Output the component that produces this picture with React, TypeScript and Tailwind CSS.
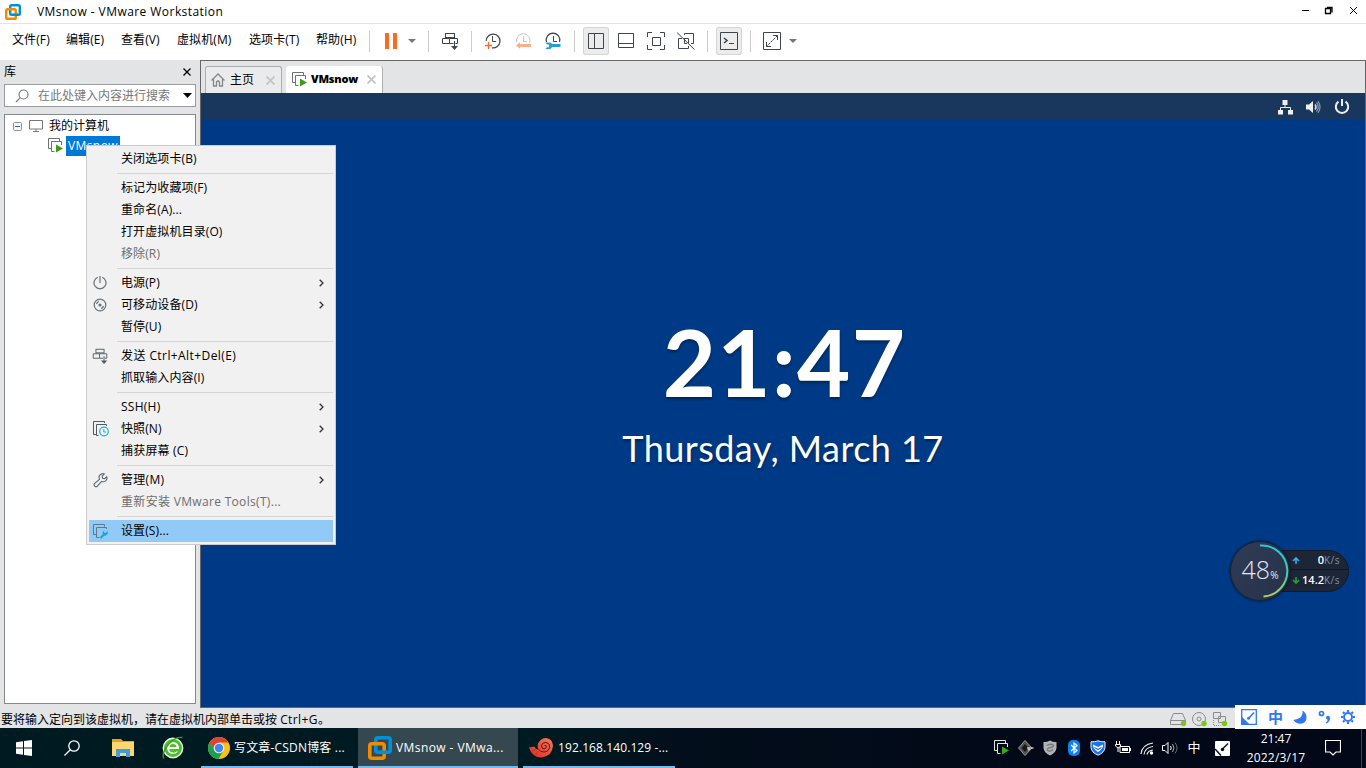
import type { ReactNode } from "react";
import clsx from "clsx";

const UI_FONT = "font-['Open_Sans','Noto_Sans_CJK_SC',sans-serif]";

/* ---------- shared icons ---------- */

function VmwareLogo({ size }: { size: number }) {
  return (
    <svg width={size} height={size} viewBox="0 0 24 24" fill="none" strokeWidth="3.6">
      <rect x="7.8" y="1.8" width="14.4" height="14.4" rx="2" stroke="#0091da" />
      <rect x="1.8" y="7.8" width="14.4" height="14.4" rx="2" stroke="#f38b00" />
      <path d="M12 16.2h7" stroke="#0091da" />
    </svg>
  );
}

function VmIcon({ stroke = "#6d7275", play = "#3f9c12" }: { stroke?: string; play?: string }) {
  return (
    <svg width="16" height="16" viewBox="0 0 16 16" fill="none">
      <path d="M3 10.5H.5V.5h11V3" stroke={stroke} />
      <path d="M6.500 13.500H3.500V3.500h10V7" stroke={stroke} />
      <path d="M8 6.500v8l7-4z" fill={play} />
    </svg>
  );
}

function SendKeysIcon({ stroke = "#3f4548" }: { stroke?: string }) {
  return (
    <svg width="26" height="26" viewBox="0 0 26 26" fill="none" stroke={stroke}>
      <rect x="8.500" y="5.500" width="9" height="4" />
      <path d="M12.500 10.500h-7v5h7zM12.500 10.500h8v5h-2M12.500 15.500h4" />
      <path d="M17.500 13v7" />
      <path d="M14 18l3.500 4 3.500-4z" fill={stroke} stroke="none" />
    </svg>
  );
}

/* ---------- title, menu and tool bars ---------- */

function TitleBar() {
  return (
    <div className="flex h-[23px] items-center bg-white pl-[5px]">
      <VmwareLogo size={16} />
      <span className="ml-4 text-[12px] tracking-[0.44px]">VMsnow - VMware Workstation</span>
      <svg className="ml-auto" width="70" height="23" viewBox="0 0 70 23" fill="none" stroke="#000">
        <path d="M6 10.500h7" />
        <path d="M29.500 8.500h5v5h-5zM31 7.500h5v5" strokeWidth="1.3" />
        <path d="M54 7l7 7M61 7l-7 7" />
      </svg>
    </div>
  );
}

const menus = [
  { label: "文件(F)", width: "w-[54px]" },
  { label: "编辑(E)", width: "w-[55px]" },
  { label: "查看(V)", width: "w-[56px]" },
  { label: "虚拟机(M)", width: "w-[72px]" },
  { label: "选项卡(T)", width: "w-[67px]" },
  { label: "帮助(H)", width: "w-[53px]" },
];

function Separator({ className }: { className?: string }) {
  return <span className={clsx("h-[21px] w-px bg-[#cbcbcb]", className)} />;
}

function Tool({ children, active, className }: { children: ReactNode; active?: boolean; className?: string }) {
  return (
    <span
      className={clsx(
        "flex h-7 w-[26px] items-center justify-center",
        active && "rounded-[3px] bg-[#ececed] shadow-[inset_0_0_0_1px_#d6d6d6]",
        className,
      )}
    >
      {children}
    </span>
  );
}

function ToolSvg({ children }: { children: ReactNode }) {
  return (
    <svg width="26" height="26" viewBox="0 0 26 26" fill="none" stroke="#3f4548" className="shrink-0">
      {children}
    </svg>
  );
}

function DropArrow() {
  return (
    <span className="flex w-4 justify-center">
      <svg width="8" height="4" viewBox="0 0 8 4">
        <path d="M0 0h8L4 4z" fill="#777" />
      </svg>
    </span>
  );
}

function MenuBar() {
  return (
    <div className="flex h-[37px] items-center border-t border-[#e3e3e3] bg-white pb-[2px] pl-3 text-[12px]">
      {menus.map((m) => (
        <span key={m.label} className={clsx("-mt-[2px] shrink-0 whitespace-nowrap tracking-[0.1px]", m.width)}>
          {m.label}
        </span>
      ))}
      <Separator />
      <Tool className="ml-2">
        <ToolSvg>
          <path d="M7 5h4v16H7zM15 5h4v16h-4z" fill="#ff6a1f" stroke="none" />
        </ToolSvg>
      </Tool>
      <DropArrow />
      <Separator className="ml-2" />
      <Tool className="ml-2">
        <SendKeysIcon />
      </Tool>
      <Separator className="ml-2" />
      <Tool className="ml-[7px]">
        <ToolSvg>
          <path d="M7.200 13A6.900 6.900 0 1 1 13 19.800" strokeWidth="1.2" />
          <path d="M13.500 8v5.500H17" />
          <path d="M6 17.500h7M9.500 14v7" stroke="#ff6a1f" strokeWidth="1.4" />
        </ToolSvg>
      </Tool>
      <Tool className="ml-[5px]">
        <ToolSvg>
          <path d="M6.800 14.500a6.800 6.800 0 1 1 13 0" stroke="#c4c6c7" />
          <path d="M13.500 8v5.500H17" stroke="#c4c6c7" />
          <path d="M6 17.500l4-3.200v1.700h11v3H10v1.700z" fill="#ffad84" stroke="none" />
        </ToolSvg>
      </Tool>
      <Tool className="ml-1">
        <ToolSvg>
          <path d="M6.500 14a6.800 6.800 0 1 1 13 0" strokeWidth="1.2" />
          <path d="M13.500 8v5.500H17" />
          <path
            d="M5.500 14.500h4q2 0 2.500 1.500h8.500v3H12q-.5 2-2.500 2h-4l1.500-1.800H9v-2.800H7z"
            fill="#259bdc"
            stroke="none"
          />
        </ToolSvg>
      </Tool>
      <Separator className="ml-2" />
      <Tool active className="ml-2">
        <ToolSvg>
          <path d="M5.500 5.500h15v15h-15zM11.500 5.500v15" />
        </ToolSvg>
      </Tool>
      <Tool className="ml-1">
        <ToolSvg>
          <path d="M5.500 5.500h15v14h-15zM5.500 15.500h15" />
        </ToolSvg>
      </Tool>
      <Tool className="ml-1">
        <ToolSvg>
          <path d="M4.500 9V4.500H9M17 4.500h4.500V9M21.500 17v4.500H17M9 21.500H4.500V17M9.500 9.500h8v8h-8z" />
        </ToolSvg>
      </Tool>
      <Tool className="ml-1">
        <ToolSvg>
          <path d="M11.500 7V5.500h9v10H18M9 10.500H5.500v10h10V18M15.500 15.500v-5h-5M11.500 10v5.500H14" />
          <path d="M4 4.500l17.500 17" />
        </ToolSvg>
      </Tool>
      <Separator className="ml-2" />
      <Tool active className="ml-2">
        <ToolSvg>
          <path d="M4.500 4.500h17v17h-17z" />
          <path d="M8 10l3 2.500L8 15" strokeWidth="1.6" />
          <path d="M13 15.500h5" />
        </ToolSvg>
      </Tool>
      <Separator className="ml-2" />
      <Tool className="ml-2">
        <ToolSvg>
          <path d="M4.500 4.500h17v17h-17z" />
          <path d="M14 7.500h4.500V12M12 18.500H7.500V14" />
          <path d="M18.500 7.500l-11 11" strokeDasharray="2.500 1" />
        </ToolSvg>
      </Tool>
      <DropArrow />
    </div>
  );
}

/* ---------- library ---------- */

function Library() {
  return (
    <aside className="flex w-[200px] shrink-0 flex-col px-1 text-[12px]">
      <div className="flex h-6 items-center justify-between pr-[5px]">
        <span>库</span>
        <svg width="8" height="8" viewBox="0 0 8 8" stroke="#000" strokeWidth="1.300">
          <path d="M.5.5l7 7M7.500.5l-7 7" />
        </svg>
      </div>
      <div className="flex h-[23px] shrink-0 items-center border border-[#999da1] bg-white pl-[10px] text-[#777]">
        <svg width="14" height="14" viewBox="0 0 14 14" fill="none" stroke="#7b7b7b" strokeWidth="1.2">
          <circle cx="8.500" cy="5.500" r="4.500" />
          <path d="M5.300 8.700L1 13" />
        </svg>
        <span className="ml-[9px] whitespace-nowrap">在此处键入内容进行搜索</span>
        <svg className="ml-auto mr-[3px]" width="9" height="5" viewBox="0 0 9 5">
          <path d="M0 0h9L4.500 5z" fill="#000" />
        </svg>
      </div>
      <div className="mb-1 mt-[7px] flex-1 border border-[#83898f] bg-white">
        <div className="flex h-[21px] items-center pl-2">
          <svg className="mt-px" width="9" height="9" viewBox="0 0 9 9">
            <rect x=".5" y=".5" width="8" height="8" rx="1" fill="#f6f6f6" stroke="#919191" />
            <path d="M2 4.500h5" stroke="#3a5fb4" />
          </svg>
          <svg className="ml-[7px] mt-px" width="14" height="12" viewBox="0 0 14 12" fill="none" stroke="#74797c">
            <path d="M.5.5h13v8.500H.5zM7 9v2.500M4 11.500h6" />
          </svg>
          <span className="ml-[6px]">我的计算机</span>
        </div>
        <div className="flex h-5 items-center pl-[43px]">
          <VmIcon />
          <span className="ml-[2px] flex h-5 w-[54px] items-center bg-[#0078d7] pl-[2px] tracking-[0.4px] text-white">
            VMsnow
          </span>
        </div>
      </div>
    </aside>
  );
}

/* ---------- console ---------- */

function CloseMark() {
  return (
    <svg width="9" height="9" viewBox="0 0 9 9" stroke="#c3c3c3" strokeWidth="1.700">
      <path d="M.5.5l8 8M8.500.5l-8 8" />
    </svg>
  );
}

function TabStrip() {
  return (
    <div className="flex h-[33px] items-end border-t border-[#666] bg-[#e3e4e6] pl-1 text-[12px]">
      <div className="flex h-[27px] w-[77px] items-center rounded-t-[3px] border border-b-0 border-[#acaeb0] bg-[#eaebec] pl-[5px]">
        <svg width="14" height="14" viewBox="0 0 14 14" fill="none" stroke="#84888b" strokeWidth="1.300">
          <path d="M.5 7.500L7 1l6.500 6.500M2.500 6v7h3V9q1.500-2 3 0v4h3V6" />
        </svg>
        <span className="ml-[5px]">主页</span>
        <span className="ml-[12px]">
          <CloseMark />
        </span>
      </div>
      <div className="ml-1 flex h-[27px] w-[97px] items-center rounded-t-[3px] border-r border-[#acaeb0] bg-white pl-[6px]">
        <VmIcon />
        <span className="ml-[3px] w-[47px] text-[11px] font-extrabold tracking-[-0.200px]">VMsnow</span>
        <span className="ml-[9px]">
          <CloseMark />
        </span>
      </div>
    </div>
  );
}

function GuestScreen() {
  return (
    <div className="flex flex-1 flex-col bg-[#003a86] text-white">
      <div className="flex h-[27px] items-center justify-end bg-[#19375d] pr-[15px]">
        <svg width="16" height="16" viewBox="0 0 16 16" fill="#eee">
          <path d="M5.500 1h5v5h-5zM1 11h5v4.500H1zM11 11h5v4.500h-5z" />
          <path d="M8 5v3.500M3.500 11V8.500H13.500V11" fill="none" stroke="#eee" />
        </svg>
        <svg className="ml-3" width="16" height="16" viewBox="0 0 16 16" fill="none">
          <path d="M1 5.500h3L8 2v12L4 10.500H1z" fill="#eee" />
          <path d="M10 5.500q2 2.500 0 5" stroke="#ddd" strokeWidth="1.500" />
          <path d="M11.500 3.500q3.500 4.500 0 9M13 2q4 6 0 12" stroke="#8294ab" strokeWidth="1.300" />
        </svg>
        <svg className="ml-[13px]" width="16" height="16" viewBox="0 0 16 16" fill="none" stroke="#eee" strokeWidth="2">
          <path d="M4.500 2.700a6.200 6.200 0 1 0 7 0M8 0v7" />
        </svg>
      </div>
      <div className="flex flex-1 flex-col items-center pt-[187px] font-['Lato',sans-serif] [text-shadow:0_2px_3px_rgba(0,0,0,0.4)]">
        <div className="flex h-[110px] items-center pl-[3px] text-[92px] font-bold leading-none tracking-[1.300px]">
          21:47
        </div>
        <div className="mt-[6px] whitespace-nowrap text-[36px] leading-[50px] tracking-[0.450px]">
          Thursday, March 17
        </div>
      </div>
    </div>
  );
}

function StatusBar() {
  return (
    <div className="flex h-5 items-center bg-[#e3e4e6] text-[12px]">
      <span className="whitespace-nowrap pl-px pt-[3px]">
        要将输入定向到该虚拟机，请在虚拟机内部单击或按 <span className="tracking-[0.400px]">Ctrl+G</span>。
      </span>
      <svg className="ml-auto mr-[138px] mt-px" width="58" height="16" viewBox="0 0 58 16" fill="none" stroke="#8a8d8f">
        <path d="M.5 9.500L3.500 2.500h9l3 7v4H.500zM.5 9.500h15" />
        <circle cx="29" cy="8" r="6.500" />
        <circle cx="29" cy="8" r="2" />
        <path d="M43.500 1.500h7v6h-7zM48.500 5.500h7v6h-7z" />
        <path d="M43.500 9v5.500h7" strokeDasharray="1 1" />
        <g fill="#7ac70c" stroke="none">
          <circle cx="13.500" cy="12.500" r="2.700" />
          <circle cx="34" cy="12.500" r="2.700" />
          <circle cx="54.500" cy="12.500" r="2.700" />
        </g>
      </svg>
    </div>
  );
}

/* ---------- context menu ---------- */

type MenuEntry = {
  label: string;
  icon?: ReactNode;
  arrow?: boolean;
  disabled?: boolean;
  selected?: boolean;
  tracking?: string;
};

const powerIcon = (
  <svg width="14" height="14" viewBox="0 0 14 14" fill="none" stroke="#66727b" strokeWidth="1.200">
    <path d="M4.800 1.200a6 6 0 1 0 4.400 0M7 0v7" />
  </svg>
);
const discIcon = (
  <svg width="14" height="14" viewBox="0 0 14 14" fill="none" stroke="#66727b" strokeWidth="1.200">
    <circle cx="7" cy="7" r="5.800" />
    <circle cx="7" cy="7" r="1" fill="#66727b" />
    <path d="M3.500 6Q4 4 6 3.500M8 10.500Q10 10 10.500 8" />
  </svg>
);
const snapshotIcon = (
  <svg className="ml-px" width="16" height="16" viewBox="0 0 16 16" fill="none" stroke="#4d5a63">
    <path d="M3 13.500H.5V.5h11V2M5.500 14.500h-2v-11h10V5" />
    <circle cx="11" cy="10.500" r="4.300" stroke="#15b5d6" strokeWidth="1.200" fill="#f1f1f1" />
    <path d="M10.800 8v3H13" stroke="#15b5d6" />
  </svg>
);
const wrenchIcon = (
  <svg width="15" height="15" viewBox="0 0 15 15" fill="none" stroke="#5b6770" strokeWidth="1.100">
    <path d="M13.800 3.800a3.800 3.800 0 0 1-5.200 4.600l-4.200 4.700a1.900 1.900 0 0 1-2.700-2.700l4.800-4.100A3.800 3.800 0 0 1 11.300 1L9.200 3.200l.4 2 2 .4z" />
  </svg>
);
const settingsIcon = (
  <svg className="ml-px mt-px" width="16" height="16" viewBox="0 0 16 16" fill="none" stroke="#617886">
    <path d="M3 10.500H.5V.5h11V2.500M6.500 13.500h-3v-10h10V5" />
    <path d="M7.500 14l4-4" stroke="#10a9d4" strokeWidth="2" />
    <path d="M14.500 7.300l-1.800 1.800-1.500-.3-.3-1.500L12 6.200a3 3 0 0 0-2.200 4l2 1.500a3 3 0 0 0 2.700-4.400z" fill="#10a9d4" stroke="none" />
  </svg>
);

const groups: MenuEntry[][] = [
  [{ label: "关闭选项卡(B)" }],
  [
    { label: "标记为收藏项(F)" },
    { label: "重命名(A)..." },
    { label: "打开虚拟机目录(O)" },
    { label: "移除(R)", disabled: true },
  ],
  [
    { label: "电源(P)", icon: powerIcon, arrow: true },
    { label: "可移动设备(D)", icon: discIcon, arrow: true },
    { label: "暂停(U)" },
  ],
  [
    {
      label: "发送 Ctrl+Alt+Del(E)",
      tracking: "tracking-[0.420px]",
      icon: (
        <span className="-m-2 scale-90">
          <SendKeysIcon stroke="#4d5a63" />
        </span>
      ),
    },
    { label: "抓取输入内容(I)" },
  ],
  [
    { label: "SSH(H)", tracking: "tracking-[0.250px]", arrow: true },
    { label: "快照(N)", icon: snapshotIcon, arrow: true },
    { label: "捕获屏幕 (C)", tracking: "tracking-[0.200px]" },
  ],
  [
    { label: "管理(M)", tracking: "tracking-[0.300px]", icon: wrenchIcon, arrow: true },
    { label: "重新安装 VMware Tools(T)...", tracking: "tracking-[0.320px]", disabled: true },
  ],
  [{ label: "设置(S)...", icon: settingsIcon, selected: true }],
];

function ContextMenu() {
  return (
    <div className="absolute left-[86px] top-[145px] w-[250px] border border-[#cccccc] bg-[#f1f1f1] p-[2px] text-[12px]">
      {groups.map((entries, i) => (
        <div key={i}>
          {i > 0 && (
            <div className="flex h-[7px] items-center pl-7">
              <span className="h-px w-full bg-[#d5d5d5]" />
            </div>
          )}
          {entries.map((e) => (
            <div
              key={e.label}
              className={clsx(
                "flex h-[22px] items-center",
                e.selected && "bg-[#91c9f7]",
                e.disabled && "text-[#6d6d6d]",
              )}
            >
              <span className="flex w-[22px] shrink-0 items-center justify-center">{e.icon}</span>
              <span className={clsx("ml-[10px] whitespace-nowrap", e.tracking ?? "tracking-[0.110px]")}>{e.label}</span>
              {e.arrow && (
                <svg className="ml-auto mr-[9px]" width="5" height="8" viewBox="0 0 5 8" fill="none" stroke="#333" strokeWidth="1.300">
                  <path d="M.7.7L4 4 .7 7.300" />
                </svg>
              )}
            </div>
          ))}
        </div>
      ))}
    </div>
  );
}

/* ---------- floating widgets ---------- */

function SpeedWidget() {
  return (
    <div className="absolute left-[1230px] top-[541px] flex h-[60px] w-[120px] items-center">
      <div className="relative z-10 flex size-[60px] shrink-0 items-center justify-center rounded-full border border-[#172133] bg-linear-to-br from-[#303c55] to-[#25324a] text-[#e3eaf4] shadow-[0_0_3px_rgba(0,0,0,0.7)]">
        <svg className="absolute inset-0" width="58" height="58" viewBox="0 0 58 58" fill="none">
          <defs>
            <linearGradient id="ring" x1="0" y1="0" x2="0" y2="1">
              <stop offset="0" stopColor="#27c8d4" />
              <stop offset=".6" stopColor="#46cda5" />
              <stop offset="1" stopColor="#b6d060" />
            </linearGradient>
          </defs>
          <path d="M29 3.500a25.500 25.500 0 0 1 3.500 51" stroke="url(#ring)" strokeWidth="2" />
        </svg>
        <span className="-mt-1 text-[25px] font-light leading-none">48</span>
        <span className="mt-2 text-[10px] leading-none">%</span>
      </div>
      <div className="-ml-6 flex h-[42px] w-[83px] flex-col rounded-r-full border border-[#111a2a] bg-[#1d2637] pl-[21px] text-[11px] text-white">
        <div className="flex h-5 items-center border-b border-[#111827] pl-1 pr-2">
          <svg width="8" height="7" viewBox="0 0 8 7" fill="none" stroke="#3da9f0" strokeWidth="1.600">
            <path d="M4 7V1M1 4l3-3 3 3" />
          </svg>
          <span className="ml-auto font-semibold">0</span>
          <span className="text-[10px] tracking-[0.500px] text-[#8590a2]">K/s</span>
        </div>
        <div className="flex h-[22px] items-center pl-1 pr-2">
          <svg width="8" height="7" viewBox="0 0 8 7" fill="none" stroke="#21a53b" strokeWidth="1.600">
            <path d="M4 0v6M1 3l3 3 3-3" />
          </svg>
          <span className="ml-auto font-semibold">14.2</span>
          <span className="text-[10px] tracking-[0.500px] text-[#8590a2]">K/s</span>
        </div>
      </div>
    </div>
  );
}

function InputMethodBar() {
  return (
    <div className="absolute left-[1235px] top-[705px] flex h-6 w-[131px] items-center bg-white pl-[6px] text-[#2f78f5]">
      <svg width="16" height="16" viewBox="0 0 16 16" fill="none" stroke="currentColor" strokeWidth="1.300">
        <path d="M.7.7h14.600v14.600H.7z" />
        <path d="M.7 8.500l6.800 6.800H.7z" fill="currentColor" />
        <path d="M8 9l5-5.500" strokeWidth="1.600" />
        <circle cx="7.500" cy="9.300" r="1.500" fill="currentColor" stroke="none" />
      </svg>
      <span className="ml-[11px] w-4 text-[15px] font-bold leading-none">中</span>
      <svg className="ml-[9px]" width="14" height="14" viewBox="0 0 14 14" fill="currentColor">
        <path d="M9.500.5q1.500 8-9 9.500 3 4 7.500 3.700 5.500-.8 5.500-6.500Q13.300 2.500 9.500.5z" />
      </svg>
      <svg className="ml-[11px]" width="14" height="14" viewBox="0 0 14 14" fill="none">
        <circle cx="3.500" cy="3.500" r="2" stroke="currentColor" strokeWidth="1.700" />
        <path d="M8 7.500a2 2 0 1 1 4 .5q0 3.500-3.500 5.500l-.8-1q2-1.300 2-2.700Q8 9.500 8 7.500z" fill="currentColor" />
      </svg>
      <svg className="ml-[8px]" width="16" height="16" viewBox="0 0 16 16" fill="none" stroke="currentColor">
        <circle cx="8" cy="8" r="4" strokeWidth="1.900" />
        <path
          d="M8 1v2M8 13v2M1 8h2M13 8h2M3 3l1.500 1.500M11.500 11.500L13 13M13 3l-1.500 1.500M4.500 11.500L3 13"
          strokeWidth="2.200"
        />
      </svg>
    </div>
  );
}

/* ---------- taskbar ---------- */

function Slot({ width, children }: { width: string; children: ReactNode }) {
  return <span className={clsx("flex h-full shrink-0 items-center justify-center", width)}>{children}</span>;
}

function TaskButton({
  icon,
  label,
  active,
  className,
  textClass,
}: {
  icon: ReactNode;
  label: string;
  active?: boolean;
  className?: string;
  textClass?: string;
}) {
  return (
    <div
      className={clsx(
        "flex h-10 shrink-0 items-center border-b-2 border-[#76b9ed] pt-px",
        active && "bg-[#35484f]",
        className,
      )}
    >
      {icon}
      <span className={clsx("whitespace-nowrap", textClass)}>{label}</span>
    </div>
  );
}

function ChromeIcon() {
  return (
    <svg width="24" height="24" viewBox="0 0 24 24">
      <circle cx="12" cy="12" r="11" fill="#fbc116" />
      <path d="M2.500 6.500A11 11 0 0 1 21.500 6.500H12L7.500 14.500z" fill="#db4437" />
      <path d="M2.500 6.500A11 11 0 0 0 11.500 23l5-8.500-8.500.5z" fill="#189f58" />
      <circle cx="12" cy="12" r="5.300" fill="#f1f1f1" />
      <circle cx="12" cy="12" r="4.200" fill="#4285f4" />
    </svg>
  );
}

function ShellIcon() {
  return (
    <svg width="24" height="22" viewBox="0 0 24 22" fill="none">
      <defs>
        <linearGradient id="shell" x1="1" y1="0" x2="0" y2="1">
          <stop offset="0" stopColor="#f47a5c" />
          <stop offset="1" stopColor="#dc2a20" />
        </linearGradient>
      </defs>
      <path
        d="M0 10.500l5.500-1q1 3 4 3Q7.500 8.500 10 5 12.500 1 17 1q6.500.5 7 7.500-.5 10.500-11.500 12Q3 20.500 0 10.500z"
        fill="url(#shell)"
      />
      <path d="M9.500 12.500q4.500 4 9 1.500 3.500-3 1.500-7-3-3-6.500-.5-2 2.500 0 5 3 1.500 4-1.500 0-2-2-1.500" stroke="#5e150e" />
      <path d="M3 14l4-2M6.500 18l2.500-4" stroke="#b52a1e" strokeWidth=".7" />
    </svg>
  );
}

function Tray() {
  return (
    <>
      <Slot width="w-6">
        <VmIcon stroke="#e6e6e6" play="#35ad1c" />
      </Slot>
      <Slot width="w-6">
        <svg width="16" height="16" viewBox="0 0 16 16" fill="none">
          <path d="M7 .5L14 8 7 15.500.5 8z" fill="#57534f" stroke="#99958f" />
          <path d="M7 4l3.500 4L7 12 3.500 8z" fill="#161720" />
          <path d="M9 8h6.500M10 10l2-1" stroke="#c7c2bf" strokeWidth="1.500" />
        </svg>
      </Slot>
      <Slot width="w-6">
        <svg width="14" height="16" viewBox="0 0 14 16" fill="none">
          <path d="M7 .5q3 1.700 6.500 1.500v6q-.5 5-6.500 7.500Q1 13 .5 8V2Q4 2.200 7 .5z" fill="#b1b3b4" />
          <path d="M3.500 5.500q6-2.500 7 0-.5 2-5 2.500-2.500 2 0 3 2.500.5 4.500-1.500" stroke="#73787a" strokeWidth="1.300" />
        </svg>
      </Slot>
      <Slot width="w-[23px]">
        <svg width="12" height="16" viewBox="0 0 12 16" fill="none">
          <rect width="12" height="16" rx="5" fill="#0b82ef" />
          <path d="M3 5l6 5.500L6 13V3l3 2.500L3 11" stroke="#fff" strokeWidth="1.200" />
        </svg>
      </Slot>
      <Slot width="w-[26px]">
        <svg width="16" height="16" viewBox="0 0 16 16" fill="none">
          <path d="M8 .8q3 1.200 7 1v5.700q-.5 5-7 7.700Q1.500 12.500 1 7.500V1.800q4 .2 7-1z" fill="#1672ee" stroke="#e8f1ff" />
          <path d="M3 4.500l5 2.500 5-2.500q.5 4-5 7.500-5.500-3.500-5-7.500z" fill="#fff" />
          <path d="M4.500 7.500L8 9.500l3.500-2" stroke="#1672ee" strokeWidth="1.200" />
        </svg>
      </Slot>
      <Slot width="w-[24px]">
        <svg width="16" height="14" viewBox="0 0 16 14" fill="none" stroke="#fff">
          <path d="M5 5.500h9.500v6h-9.500zM15.500 7v3" />
          <path d="M7 7h6v3H7z" fill="#fff" stroke="none" />
          <path d="M1.500 0v3M4.500 0v3M.5 3.500h5v2L3 7 .5 5zM3 7v4" />
        </svg>
      </Slot>
      <Slot width="w-6">
        <svg width="14" height="14" viewBox="0 0 14 14" fill="none" stroke="#eee" strokeWidth="1.200">
          <path d="M1 13Q2 3.500 13 2M4 13.500Q5 6.500 13 5.500M7 13.500Q8 9.500 13 9" />
          <circle cx="11.500" cy="12" r="1.700" fill="#fff" stroke="none" />
        </svg>
      </Slot>
      <Slot width="w-[22px]">
        <svg width="17" height="14" viewBox="0 0 17 14" fill="none" stroke="#fff">
          <path d="M.5 4.500h2.500l3-3v11l-3-3H.5z" />
          <path d="M8.500 5q1.500 2 0 4" />
          <path d="M10.500 3q3 4 0 8" stroke="#aaa" />
          <path d="M13 1.500q4 5.500 0 11" stroke="#676b73" />
        </svg>
      </Slot>
      <Slot width="w-[26px]">
        <span className="text-[13px]">中</span>
      </Slot>
      <Slot width="w-[30px]">
        <svg width="15" height="15" viewBox="0 0 15 15" fill="none" stroke="#07101d">
          <rect width="15" height="15" rx="1" fill="#fff" stroke="none" />
          <path d="M0 8l6 6.500" strokeWidth="1.500" />
          <path d="M7 8.500l6-6" strokeWidth="1.500" />
          <circle cx="7.500" cy="8.500" r="1.700" fill="#07101d" stroke="none" />
        </svg>
      </Slot>
    </>
  );
}

function Taskbar() {
  return (
    <footer className="flex h-10 items-center bg-linear-to-r from-[#001a21] from-40% via-[#020e1b] to-[#020817] to-80% text-[12px] text-white">
      <Slot width="w-12">
        <svg width="16" height="16" viewBox="0 0 16 16" fill="#fff">
          <path d="M0 2.200L7 1.200v6.300H0zM8 1l8-1v7.500H8zM0 8.500h7v6.300l-7-1zM8 8.500h8V16l-8-1z" />
        </svg>
      </Slot>
      <Slot width="w-12">
        <svg width="16" height="16" viewBox="0 0 16 16" fill="none" stroke="#fff" strokeWidth="1.300">
          <circle cx="10" cy="6" r="5.200" />
          <path d="M6.300 9.700L.5 15.500" />
        </svg>
      </Slot>
      <Slot width="w-[54px]">
        <svg width="22" height="18" viewBox="0 0 22 18">
          <path d="M0 0h9l2 2h11v15H0z" fill="#e9a020" />
          <path d="M0 3h22v14H0z" fill="#fcd66f" />
          <path d="M4 18v-8h14v8h-4v-4H8v4z" fill="#3e9bdc" />
        </svg>
      </Slot>
      <Slot width="w-[45px]">
        <svg width="24" height="24" viewBox="0 0 24 24" fill="none">
          <circle cx="12" cy="12" r="9.700" fill="#4cbf2b" stroke="#e9f9e7" strokeWidth="1.400" />
          <circle cx="12" cy="12" r="6" fill="#fff" />
          <path d="M8.500 11a3.500 3 0 0 1 7 0zM8.500 13h10v2.500h-3a4 3 0 0 1-7-2.500z" fill="#4cbf2b" />
          <path d="M3 22.500Q0 18 7 9T21.500 1.500" stroke="#3b9f22" strokeWidth="1.300" />
        </svg>
      </Slot>
      <TaskButton
        className="ml-[6px] w-[152px] pl-[6px]"
        textClass="ml-[3px] tracking-[0.180px]"
        icon={<ChromeIcon />}
        label="写文章-CSDN博客 ..."
      />
      <TaskButton
        active
        className="ml-[5px] w-[160px] pl-[10px]"
        textClass="ml-1 tracking-[0.420px]"
        icon={<VmwareLogo size={24} />}
        label="VMsnow - VMwa..."
      />
      <TaskButton
        className="ml-[5px] w-[152px] pl-[6px]"
        textClass="ml-[5px] tracking-[0.100px]"
        icon={<ShellIcon />}
        label="192.168.140.129 -..."
      />
      <div className="ml-auto flex h-full items-center">
        <Tray />
        <div className="flex w-[78px] flex-col items-center leading-[19px]">
          <span>21:47</span>
          <span className="tracking-[0.200px]">2022/3/17</span>
        </div>
        <Slot width="w-[36px]">
          <svg width="16" height="16" viewBox="0 0 16 16" fill="none" stroke="#fff" strokeWidth="1.200">
            <path d="M.5.5h15v11.500h-4.500L8 15l-3-3H.5z" />
          </svg>
        </Slot>
        <span className="ml-[10px] mr-1 h-full w-px bg-[#3b444c]" />
      </div>
    </footer>
  );
}

export default function App() {
  return (
    <div className={clsx("relative flex h-[768px] w-[1366px] flex-col overflow-hidden bg-[#e3e4e6] text-black", UI_FONT)}>
      <TitleBar />
      <MenuBar />
      <div className="flex h-[648px]">
        <Library />
        <main className="flex flex-1 flex-col border-x border-b border-[#666]">
          <TabStrip />
          <GuestScreen />
        </main>
      </div>
      <StatusBar />
      <Taskbar />
      <SpeedWidget />
      <InputMethodBar />
      <ContextMenu />
    </div>
  );
}
